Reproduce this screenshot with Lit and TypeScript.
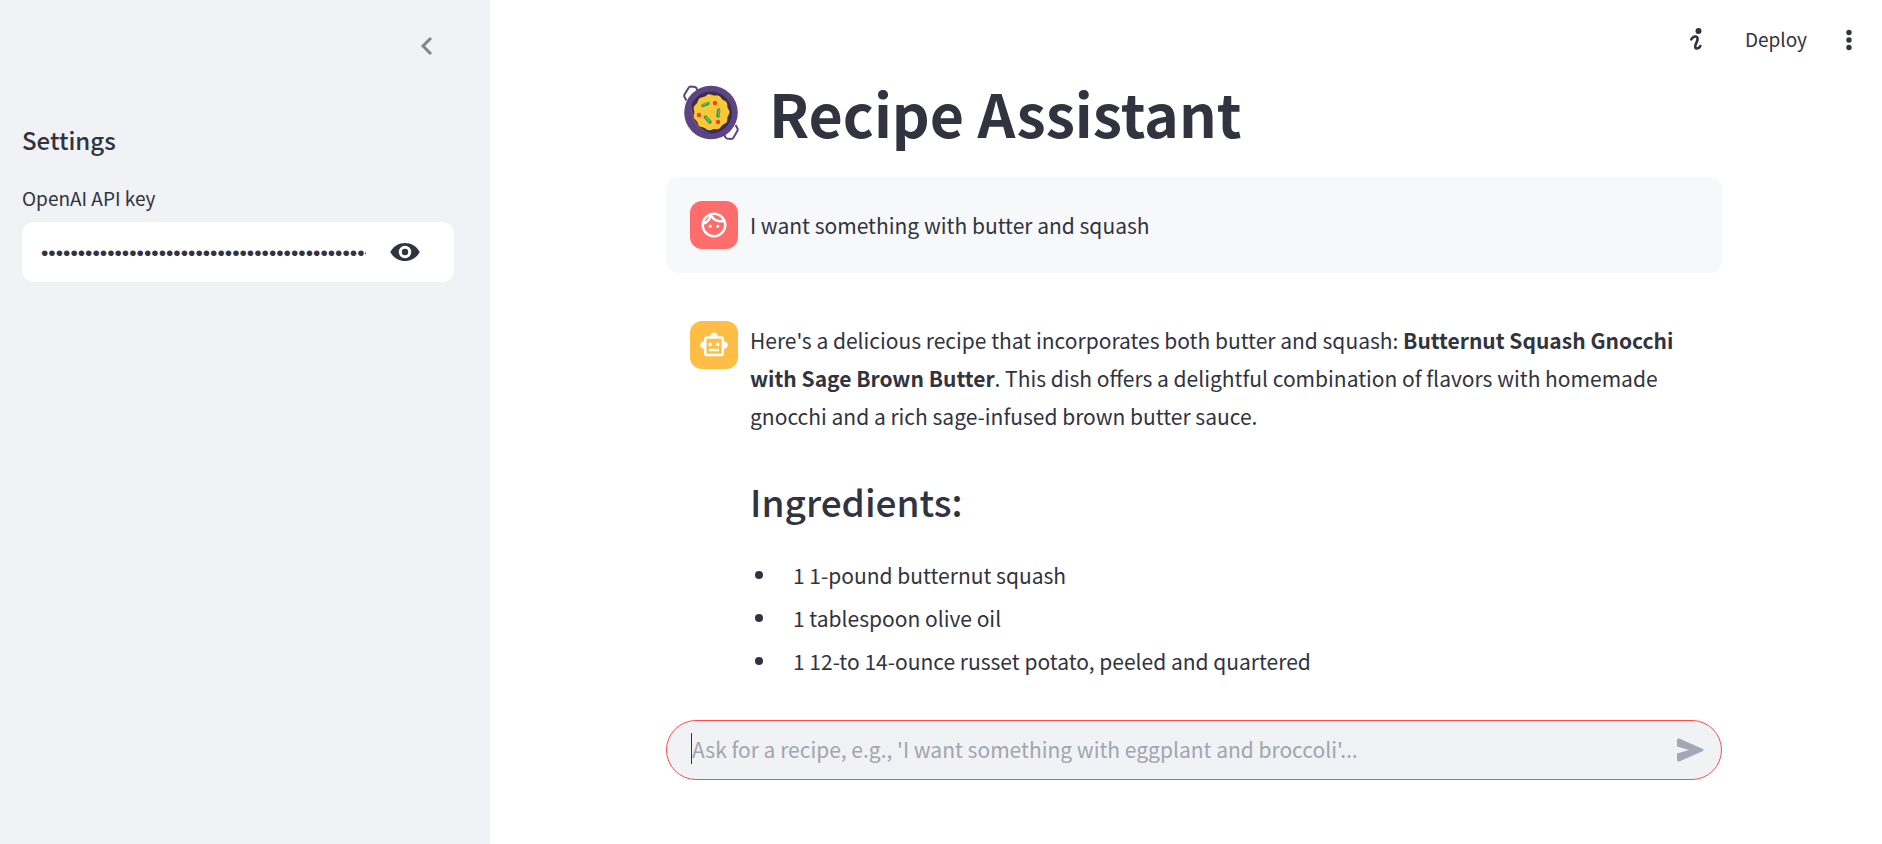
import { LitElement, html, css } from "lit";
import { customElement, state } from "lit/decorators.js";

const FACE = "M10.25 13c0 .69-.56 1.25-1.25 1.25S7.75 13.69 7.75 13s.56-1.25 1.25-1.25 1.25.56 1.25 1.25zM15 11.75c-.69 0-1.25.56-1.25 1.25s.56 1.25 1.25 1.25 1.25-.56 1.25-1.25-.56-1.25-1.25-1.25zm7 .25c0 5.52-4.48 10-10 10S2 17.52 2 12 6.48 2 12 2s10 4.48 10 10zM10.66 4.12C12.06 6.44 14.6 8 17.5 8c.46 0 .91-.05 1.34-.12C17.44 5.56 14.9 4 12 4c-.46 0-.91.05-1.34.12zM4.42 9.47c1.71-.97 3.03-2.55 3.66-4.44C6.37 6 5.05 7.58 4.42 9.47zM20 12c0-.78-.12-1.53-.33-2.24-.7.15-1.42.24-2.17.24-3.13 0-5.92-1.44-7.76-3.69C8.69 8.87 6.6 10.88 4 11.86c.01.04 0 .09 0 .14 0 4.41 3.59 8 8 8s8-3.59 8-8z";
const ROBOT = "M20 9V7c0-1.1-.9-2-2-2h-3c0-1.66-1.34-3-3-3S9 3.34 9 5H6c-1.1 0-2 .9-2 2v2c-1.66 0-3 1.34-3 3s1.34 3 3 3v4c0 1.1.9 2 2 2h12c1.1 0 2-.9 2-2v-4c1.66 0 3-1.34 3-3s-1.34-3-3-3zm-2 10H6V7h12v12zm-9-6c-.83 0-1.5-.67-1.5-1.5S8.17 10 9 10s1.5.67 1.5 1.5S9.83 13 9 13zm7.5-1.5c0 .83-.67 1.5-1.5 1.5s-1.5-.67-1.5-1.5.67-1.5 1.5-1.5 1.5.67 1.5 1.5zM8 15h8v2H8v-2z";

const INGREDIENTS = [
  "1 1-pound butternut squash",
  "1 tablespoon olive oil",
  "1 12-to 14-ounce russet potato, peeled and quartered",
];

/* Wavy rim of the dish in the pan: eleven soft lobes around (28, 27). */
const DISH =
  "M" +
  Array.from({ length: 132 }, (_, i) => {
    const a = (i / 132) * Math.PI * 2;
    const r = 17.6 + 0.6 * Math.cos(11 * a);
    return `${(28.3 + r * Math.cos(a)).toFixed(2)} ${(27.3 + r * Math.sin(a)).toFixed(2)}`;
  }).join("L") +
  "Z";

@customElement("app-root")
export class AppRoot extends LitElement {
  @state() private showKey = false;

  static styles = css`
    :host {
      display: flex;
      min-height: 100vh;
      color: #31333f;
      background: #fff;
      font-family: "Noto Sans CJK SC", "Noto Sans", sans-serif;
      font-size: 21px;
      line-height: 38px;
    }
    * { box-sizing: border-box; }
    h1, h2, p, ul { margin: 0; padding: 0; }
    svg { display: block; }
    button {
      display: flex;
      align-items: center;
      justify-content: center;
      border: 0;
      padding: 0;
      background: none;
      color: inherit;
      font: inherit;
      cursor: pointer;
    }
    input {
      border: 0;
      outline: 0;
      padding: 0;
      margin: 0;
      min-width: 0;
      background: none;
      color: inherit;
      font: inherit;
    }
    .sidebar {
      flex: 0 0 490px;
      padding: 28px 36px 28px 22px;
      background: #f0f2f6;
    }
    .collapse { width: 36px; height: 36px; margin: 0 9px 0 auto; color: #84868f; }
    .settings { margin-top: 57px; font-size: 24px; font-weight: 500; }
    .label { display: block; margin-top: 23px; font-size: 19px; line-height: 32px; }
    .secret {
      display: flex;
      align-items: center;
      height: 60px;
      margin-top: 8px;
      padding: 2px 34px 0 19px;
      border-radius: 12px;
      background: #fff;
    }
    .secret input { flex: 1; height: 38px; font-family: "Liberation Sans", sans-serif; }
    .eye { width: 30px; height: 36px; margin-left: 24px; }
    .main {
      flex: 1;
      min-width: 0;
      display: flex;
      flex-direction: column;
      padding-left: 16px;
    }
    .toolbar {
      display: flex;
      align-items: center;
      justify-content: flex-end;
      height: 78px;
      padding-right: 15px;
      font-size: 19px;
    }
    .info { width: 36px; height: 36px; margin-right: 32px; }
    .more { width: 36px; height: 36px; margin-left: 24px; }
    .column { width: 100%; max-width: 1056px; margin: 0 auto; }
    .title {
      display: flex;
      align-items: center;
      gap: 30px;
      height: 70px;
      padding-left: 17px;
      font-size: 59px;
      font-weight: 700;
      line-height: 70px;
    }
    .message { display: flex; gap: 12px; padding: 24px; border-radius: 12px; }
    .user { margin-top: 29px; align-items: center; background: #f7f8fa; }
    .assistant { margin-top: 24px; padding-bottom: 0; }
    .avatar {
      flex: 0 0 48px;
      height: 48px;
      display: grid;
      place-items: center;
      border-radius: 12px;
      color: #fff;
    }
    .red { background: #ff6c6c; }
    .orange { background: #ffbd45; }
    .subhead { margin-top: 40px; font-size: 37px; font-weight: 500; line-height: 52px; }
    .list { margin-top: 29px; padding-left: 5px; list-style: none; }
    .list li { display: flex; align-items: center; gap: 30px; margin-bottom: 5px; }
    .list li::before {
      content: "";
      flex: none;
      width: 8px;
      height: 8px;
      border-radius: 50%;
      background: currentColor;
    }
    .ask {
      display: flex;
      align-items: center;
      height: 60px;
      margin-top: auto;
      margin-bottom: 64px;
      padding: 0 13px 3px 24px;
      border: 1px solid #ff4b4b;
      border-radius: 30px;
      background: #f0f2f6;
    }
    .caret { width: 1px; height: 31px; background: #31333f; }
    .ask input { flex: 1; height: 38px; }
    .ask input::placeholder { color: #a3a5ae; opacity: 1; }
    .send { width: 36px; height: 36px; color: #a3a8b8; }
  `;

  private icon(path: string) {
    return html`<svg width="30" height="30" viewBox="0 0 24 24" fill="currentColor" aria-hidden="true"><path d=${path}></path></svg>`;
  }

  private pan() {
    return html`<svg width="56" height="56" viewBox="0 0 56 56" fill="none" aria-hidden="true">
      <g stroke="#5c4485" stroke-width="2">
        <path d="M3.500 15.500 1.500 12Q.8 10.800 1.500 9.600L5.600 2.800Q6.300 1.500 7.700 1.500L12 2.100Q13.500 2.400 14.300 5"></path>
        <path d="M52.500 40 54.500 43.500Q55 44.700 54.300 45.900L50.400 52.700Q49.700 54 48.300 54L44 53.400Q42.500 53.100 41.200 50"></path>
      </g>
      <circle cx="28" cy="27.500" r="26.800" fill="#5c4485"></circle>
      <circle cx="28" cy="27.500" r="21" fill="#3d2e4d"></circle>
      <path d="M8.500 20A21 21 0 0 0 28 48.500Q15 44 11 33Z" fill="#684c86"></path>
      <path d=${DISH} fill="#fac736"></path>
      <g stroke="#359b4c" stroke-width="3.4" stroke-linecap="round">
        <path d="m20 20.500 5-2M35.700 25l-.7 6M22.500 32l4.500 5"></path>
      </g>
      <g stroke="#75c65b" stroke-width="1.2" stroke-linecap="round">
        <path d="m20 20 4.500-2M36.200 25l-.7 5M23 32l3.500 4"></path>
      </g>
      <g fill="#ec4134"><circle cx="32" cy="18" r="2.2"></circle><circle cx="16" cy="30" r="2.2"></circle><circle cx="35" cy="37" r="2.2"></circle></g>
    </svg>`;
  }

  render() {
    return html`
      <aside class="sidebar">
        <button class="collapse" aria-label="Collapse sidebar">
          <svg width="36" height="36" viewBox="0 0 36 36" fill="none" stroke="currentColor" stroke-width="3"><path d="M22 10 14 18l8 8"></path></svg>
        </button>
        <h2 class="settings">Settings</h2>
        <label class="label" for="key">OpenAI API key</label>
        <div class="secret">
          <input id="key" type=${this.showKey ? "text" : "password"} autocomplete="off" .value=${"x".repeat(51)} />
          <button class="eye" aria-label="Show key" @click=${() => (this.showKey = !this.showKey)}>
            <svg width="30" height="20" viewBox="0 0 30 20"><path fill="currentColor" d="M.3 9C3.500 3 9 0 15 0S26.500 3 29.700 9C26.500 15 21 18 15 18S3.500 15 .3 9Z"></path><circle cx="15" cy="9" r="4.7" fill="currentColor" stroke="#fff" stroke-width="3"></circle></svg>
          </button>
        </div>
      </aside>
      <main class="main">
        <header class="toolbar">
          <button class="info" aria-label="Info">
            <svg width="36" height="36" viewBox="0 0 36 36" fill="none"><circle cx="21.500" cy="10" r="3" fill="currentColor"></circle><path d="M14.300 18.300q2-3.300 4.500-2.800t1.500 4l-1.800 4.500q-1 3.500 1.500 3.500 2 0 3.300-2.500" stroke="currentColor" stroke-width="2.600" stroke-linecap="round"></path></svg>
          </button>
          <button class="deploy">Deploy</button>
          <button class="more" aria-label="Menu">
            <svg width="36" height="36" viewBox="0 0 36 36" fill="currentColor"><circle cx="18" cy="11.500" r="2.7"></circle><circle cx="18" cy="19" r="2.7"></circle><circle cx="18" cy="26.500" r="2.7"></circle></svg>
          </button>
        </header>
        <h1 class="column title">${this.pan()}<span>Recipe Assistant</span></h1>
        <section class="column message user">
          <div class="avatar red">${this.icon(FACE)}</div>
          <p>I want something with butter and squash</p>
        </section>
        <section class="column message assistant">
          <div class="avatar orange">${this.icon(ROBOT)}</div>
          <div>
            <p>Here's a delicious recipe that incorporates both butter and squash: <b>Butternut Squash Gnocchi with Sage Brown Butter</b>. This dish offers a delightful combination of flavors with homemade gnocchi and a rich sage-infused brown butter sauce.</p>
            <h2 class="subhead">Ingredients:</h2>
            <ul class="list">${INGREDIENTS.map((item) => html`<li>${item}</li>`)}</ul>
          </div>
        </section>
        <form class="column ask" @submit=${(e: Event) => e.preventDefault()}>
          <span class="caret"></span>
          <input aria-label="Ask for a recipe" placeholder="Ask for a recipe, e.g., 'I want something with eggplant and broccoli'..." />
          <button class="send" aria-label="Send">
            <svg width="36" height="36" viewBox="0 0 36 36" fill="currentColor"><path d="M5 9Q5 7 7.200 7.500L31 18q1.500 1 0 2L7.200 30.500Q5 31 5 29V22.500L17 19 5 15.500Z"></path></svg>
          </button>
        </form>
      </main>
    `;
  }
}
